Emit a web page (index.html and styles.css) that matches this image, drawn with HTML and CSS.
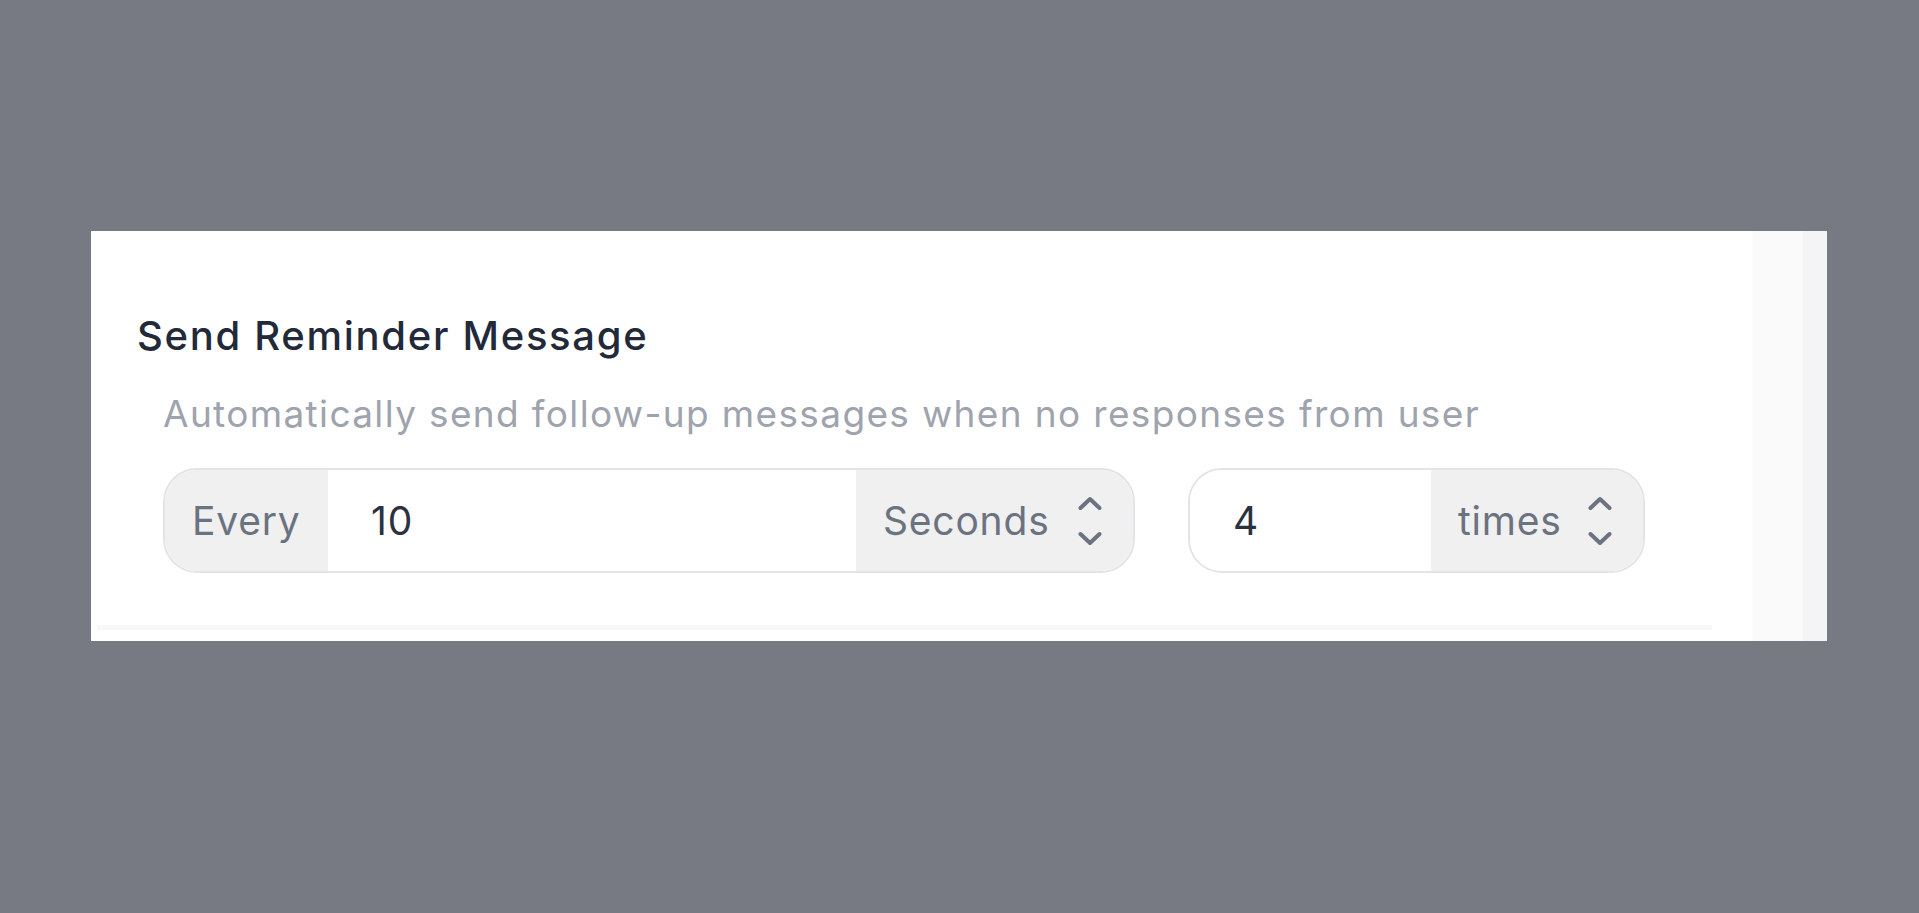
FILE: index.html
```html
<!DOCTYPE html>
<html lang="en">
<head>
<meta charset="utf-8">
<title>Send Reminder Message</title>
<link rel="stylesheet" href="styles.css">
</head>
<body>
<div class="card">
  <div class="content">
    <h2 class="title">Send Reminder Message</h2>
    <p class="subtitle">Automatically send follow-up messages when no responses from user</p>
    <div class="row">
      <div class="group group-interval">
        <span class="prefix">Every</span>
        <input class="field field-interval" type="text" value="10">
        <span class="suffix suffix-interval">Seconds
          <svg class="updown" viewBox="0 0 24 50" width="24" height="50" aria-hidden="true"><path d="M2.5 12 L12 3 L21.5 12"/><path d="M2.5 38 L12 47 L21.5 38"/></svg>
        </span>
      </div>
      <div class="group group-times">
        <input class="field field-times" type="text" value="4">
        <span class="suffix suffix-times">times
          <svg class="updown" viewBox="0 0 24 50" width="24" height="50" aria-hidden="true"><path d="M2.5 12 L12 3 L21.5 12"/><path d="M2.5 38 L12 47 L21.5 38"/></svg>
        </span>
      </div>
    </div>
    <div class="divider"></div>
  </div>
  <div class="strip strip-light"></div>
  <div class="strip strip-gray"></div>
</div>
</body>
</html>
```
FILE: styles.css
```css
* { box-sizing: border-box; }
html, body { height: 100%; }
body {
  margin: 0;
  background: #777a83;
  font-family: Inter, "Noto Sans", "Liberation Sans", sans-serif;
  padding: 231px 0 0 91px;
}
.card {
  width: 1736px;
  height: 410px;
  background: #ffffff;
  display: flex;
}
.content {
  flex: 0 0 1662px;
  padding: 81px 0 0 0;
}
.title {
  margin: 0 0 0 46px;
  font-size: 40px;
  line-height: 48px;
  font-weight: 500;
  letter-spacing: 1.7px;
  color: #222939;
}
.subtitle {
  margin: 31px 0 0 72px;
  font-size: 37px;
  line-height: 46px;
  font-weight: 400;
  letter-spacing: 1.35px;
  color: #9ea3ad;
}
.row {
  display: flex;
  gap: 53px;
  margin: 31px 0 0 72px;
}
.group {
  display: flex;
  height: 105px;
  border: 2px solid #e4e4e6;
  border-radius: 34px;
  overflow: hidden;
  font-size: 39px;
  letter-spacing: 0.8px;
}
.group-interval { width: 972px; }
.group-times { width: 457px; }
.prefix {
  flex: 0 0 163px;
  background: #f0f0f1;
  color: #6b7280;
  display: flex;
  align-items: center;
  padding-left: 27px;
}
.field {
  border: none;
  outline: none;
  background: #ffffff;
  font: inherit;
  letter-spacing: inherit;
  color: #2a3140;
  min-width: 0;
  padding: 0 0 0 43px;
}
.field-interval { flex: 0 0 528px; }
.field-times { flex: 0 0 241px; }
.suffix {
  flex: 1 1 auto;
  background: #f0f0f1;
  color: #6b7280;
  display: flex;
  align-items: center;
  justify-content: space-between;
  padding: 0 31px 0 27px;
}
.updown {
  fill: none;
  stroke: #6b7280;
  stroke-width: 4;
  stroke-linecap: round;
  stroke-linejoin: round;
}
.divider {
  margin: 52px 0 0 6px;
  width: 1615px;
  height: 5px;
  background: #f8f8f9;
}
.strip { height: 100%; }
.strip-light { flex: 0 0 50px; background: #fafafb; }
.strip-gray { flex: 0 0 24px; background: #f4f4f6; }
```
